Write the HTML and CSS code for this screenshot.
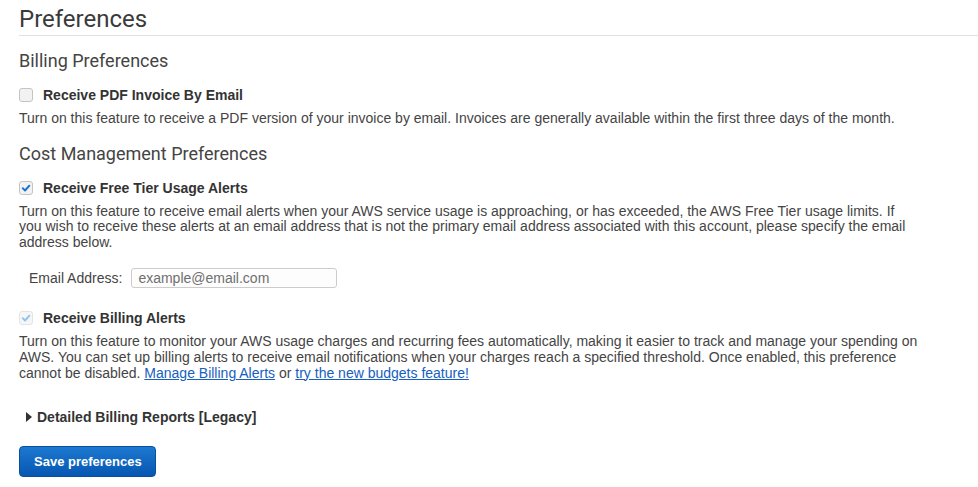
FILE: index.html
```html
<!DOCTYPE html>
<html lang="en">
<head>
<meta charset="utf-8">
<title>Preferences</title>
<link rel="stylesheet" href="styles.css">
</head>
<body>
<div class="page">
  <h1 class="page-title">Preferences</h1>

  <section class="section first">
    <h2 class="section-title">Billing Preferences</h2>
    <div class="check-row">
      <span class="cb"></span>
      <span class="check-label">Receive PDF Invoice By Email</span>
    </div>
    <p class="desc">Turn on this feature to receive a PDF version of your invoice by email. Invoices are generally available within the first three days of the month.</p>
  </section>

  <section class="section">
    <h2 class="section-title">Cost Management Preferences</h2>
    <div class="check-row">
      <span class="cb checked"><svg viewBox="0 0 14 14" width="14" height="14"><path d="M3.2 7.2 L5.9 9.9 L10.9 4.3" fill="none" stroke="#1a74cf" stroke-width="2.3" stroke-linecap="round" stroke-linejoin="round"/></svg></span>
      <span class="check-label">Receive Free Tier Usage Alerts</span>
    </div>
    <p class="desc">Turn on this feature to receive email alerts when your AWS service usage is approaching, or has exceeded, the AWS Free Tier usage limits. If you wish to receive these alerts at an email address that is not the primary email address associated with this account, please specify the email address below.</p>
    <div class="email-row">
      <label class="email-label" for="email">Email Address:</label>
      <input class="email-input" id="email" type="text" placeholder="example@email.com">
    </div>

    <div class="check-row billing">
      <span class="cb disabled"><svg viewBox="0 0 14 14" width="14" height="14"><path d="M3.2 7.2 L5.9 9.9 L10.9 4.3" fill="none" stroke="#92c3ec" stroke-width="2.3" stroke-linecap="round" stroke-linejoin="round"/></svg></span>
      <span class="check-label">Receive Billing Alerts</span>
    </div>
    <p class="desc">Turn on this feature to monitor your AWS usage charges and recurring fees automatically, making it easier to track and manage your spending on AWS. You can set up billing alerts to receive email notifications when your charges reach a specified threshold. Once enabled, this preference cannot be disabled. <a href="#">Manage Billing Alerts</a> or <a href="#">try the new budgets feature!</a></p>
  </section>

  <div class="expander">
    <span class="caret"></span>
    <span class="expander-label">Detailed Billing Reports [Legacy]</span>
  </div>

  <button class="save-btn" type="button">Save preferences</button>
</div>
</body>
</html>
```

FILE: styles.css
```css
html, body {
  margin: 0;
  padding: 0;
  background: #ffffff;
}

body {
  font-family: "Liberation Sans", Arial, sans-serif;
  font-size: 14px;
  color: #444444;
}

.page {
  padding: 5px 0 0 19px;
}

.page-title {
  margin: 0;
  font-family: Roboto, "Liberation Sans", sans-serif;
  font-weight: 400;
  font-size: 24px;
  line-height: 28px;
  color: #3a3a3a;
  padding-bottom: 2px;
  border-bottom: 1px solid #e1e1e1;
}

.section-title {
  margin: 0 0 16px;
  font-family: Roboto, "Liberation Sans", sans-serif;
  font-weight: 400;
  font-size: 18px;
  line-height: 21px;
  color: #444444;
}

.section {
  margin-top: 16px;
}

.section.first {
  margin-top: 14px;
}

.check-row {
  display: flex;
  align-items: center;
  height: 16px;
}

.check-row.billing {
  margin-top: 22px;
}

.cb {
  box-sizing: border-box;
  width: 14px;
  height: 14px;
  border: 1px solid #c4c4c4;
  border-radius: 3px;
  background: #f2f2f2;
  margin-right: 10px;
  display: flex;
  align-items: center;
  justify-content: center;
  flex: none;
}

.cb svg {
  display: block;
}

.cb.disabled {
  border-color: #e4e4e4;
  background: #f6f6f6;
}

.check-label {
  font-weight: 700;
  line-height: 16px;
  color: #333333;
}

.desc {
  margin: 8px 0 0;
  max-width: 899px;
  line-height: 15.6px;
}

.desc a {
  color: #1560c0;
  text-decoration: underline;
}

.email-row {
  display: flex;
  align-items: center;
  margin-top: 18px;
  padding-left: 10px;
  height: 20px;
}

.email-label {
  line-height: 16px;
  margin-right: 9px;
}

.email-input {
  box-sizing: border-box;
  width: 206px;
  height: 20px;
  margin: 0;
  padding: 0 6px;
  border: 1px solid #cccccc;
  border-radius: 3px;
  background: #fdfdfd;
  font-family: "Liberation Sans", Arial, sans-serif;
  font-size: 14px;
  color: #444444;
}

.email-input::placeholder {
  color: #6f6f6f;
}

.expander {
  display: flex;
  align-items: center;
  margin-top: 28px;
  padding-left: 7px;
  height: 16px;
}

.caret {
  width: 0;
  height: 0;
  border-left: 6px solid #333333;
  border-top: 5.5px solid transparent;
  border-bottom: 5.5px solid transparent;
  margin-right: 5px;
}

.expander-label {
  font-weight: 700;
  color: #333333;
  line-height: 16px;
}

.save-btn {
  display: block;
  margin-top: 21px;
  box-sizing: border-box;
  height: 31px;
  padding: 0 13px 0 14px;
  border: 1px solid #0a4f9e;
  border-radius: 4px;
  background: linear-gradient(#1d78d0, #0657b2);
  color: #ffffff;
  font-family: "Liberation Sans", Arial, sans-serif;
  font-size: 13px;
  font-weight: 700;
  cursor: pointer;
}
```
